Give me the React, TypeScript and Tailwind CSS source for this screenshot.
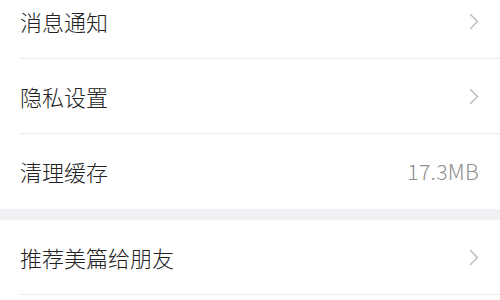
const Chevron = () => (
  <svg width="10" height="17" viewBox="0 0 10 17" fill="none" className="shrink-0">
    <path d="M1.5 1.5 L8.5 8.5 L1.5 15.5" stroke="#bdbdbd" strokeWidth="1.5" strokeLinecap="round" strokeLinejoin="round" />
  </svg>
);

type Row = { label: string; value?: string; last?: boolean };

const Item = ({ label, value, last }: Row) => (
  <div className="pl-5 bg-white">
    <div className={`h-[75px] flex items-center justify-between pr-[21px] ${last ? "" : "border-b border-[#ececec]"}`}>
      <span className="text-[22px] font-light text-[#222222]">{label}</span>
      {value ? (
        <span className="text-[21.5px] font-light text-[#8f8f8f] tracking-[0.2px]">{value}</span>
      ) : (
        <Chevron />
      )}
    </div>
  </div>
);

export default function App() {
  return (
    <div className="w-[500px] h-[300px] overflow-hidden bg-white font-['Noto_Sans_CJK_SC','Liberation_Sans',sans-serif]">
      <div className="-mt-[16px]">
        <Item label="消息通知" />
        <Item label="隐私设置" />
        <Item label="清理缓存" value="17.3MB" last />
        <div className="h-[11px] bg-[#f0f1f4]" />
        <Item label="推荐美篇给朋友" />
      </div>
    </div>
  );
}
